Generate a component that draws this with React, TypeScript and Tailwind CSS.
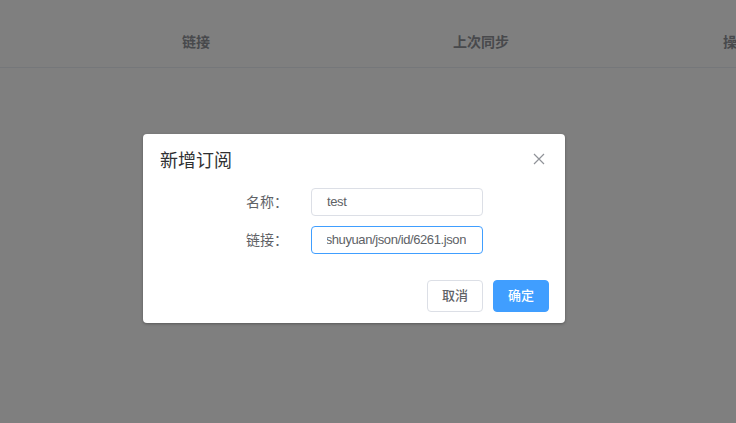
import React from "react";

const sans = "font-['Liberation_Sans','Noto_Sans_CJK_SC',sans-serif]";

const columns = [
  { title: "链接", width: "w-[392px]" },
  { title: "上次同步", width: "w-[178px]" },
  { title: "操作", width: "w-[334px]" },
];

const CloseIcon = () => (
  <svg width="12" height="12" viewBox="0 0 12 12" className="text-[#909399]">
    <path d="M1 1L11 11M11 1L1 11" stroke="currentColor" strokeWidth="1.2" fill="none" />
  </svg>
);

const FormRow = ({ label, children }: { label: string; children: React.ReactNode }) => (
  <div className="flex items-center">
    <label className="w-[148px] pr-[23px] text-right text-[14px] text-[#606266]">{label}</label>
    {children}
  </div>
);

export default function App() {
  const url = "http://yck.mumuceo.com/yuedu/shuyuan/json/id/6261.json";

  return (
    <div className={`relative h-[423px] w-[736px] overflow-hidden bg-white ${sans}`}>
      {/* subscription table header */}
      <div className="mt-[18px] flex h-[50px] items-center border-b border-[#ebeef5] whitespace-nowrap">
        {columns.map((c) => (
          <div key={c.title} className={`${c.width} shrink-0 text-center text-[14px] font-bold text-[#909399]`}>
            {c.title}
          </div>
        ))}
      </div>

      {/* modal */}
      <div className="absolute inset-0 bg-black/50">
        <div className="ml-[143px] mt-[134px] w-[422px] rounded-[4px] bg-white shadow-[0_1px_3px_rgba(0,0,0,0.3)]">
          <div className="flex items-center justify-between pl-[17px] pr-[18px] pt-[15px]">
            <span className="h-6 text-[18px] leading-6 text-[#303133]">新增订阅</span>
            <button className="-mt-[5px] flex h-4 w-4 items-center justify-center">
              <CloseIcon />
            </button>
          </div>

          <div className="mt-[15px] flex flex-col gap-[10px] px-5">
            <FormRow label="名称：">
              <div className="flex h-[28px] w-[172px] items-center rounded-[4px] border border-[#dcdfe6] px-[15px] text-[13px] tracking-[-0.4px] text-[#606266]">
                test
              </div>
            </FormRow>
            <FormRow label="链接：">
              <div className="flex h-[28px] w-[172px] items-center rounded-[4px] border border-[#409eff] pl-[15px] pr-[16px]">
                <div className="flex w-full justify-end overflow-hidden whitespace-nowrap text-[13px] tracking-[-0.4px] text-[#606266]">
                  <span className="shrink-0">{url}</span>
                </div>
              </div>
            </FormRow>
          </div>

          <div className="mt-[26px] flex justify-end gap-[10px] pb-[11px] pr-4">
            <button className="h-8 w-14 rounded-[4px] border border-[#dcdfe6] bg-white text-[13px] font-medium text-[#606266]">
              取消
            </button>
            <button className="h-8 w-14 rounded-[4px] border border-[#409eff] bg-[#409eff] text-[13px] font-medium text-white">
              确定
            </button>
          </div>
        </div>
      </div>
    </div>
  );
}
